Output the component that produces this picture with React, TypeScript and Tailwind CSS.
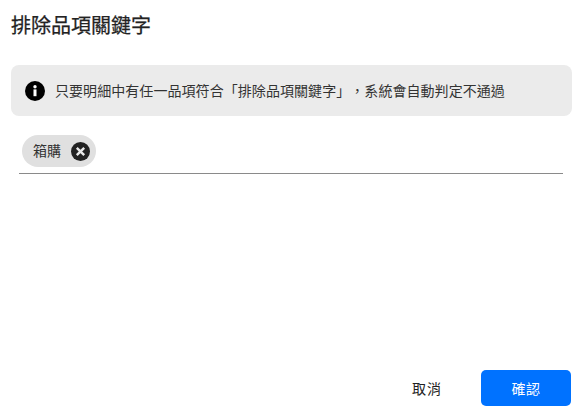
export default function App() {
  return (
    <div className="w-[583px] h-[416px] bg-white flex flex-col font-['Inter','Noto_Sans_CJK_TC',sans-serif] text-[#212121] overflow-hidden [text-spacing-trim:space-all]">
      <div className="h-[65px] shrink-0 pl-[11px] pt-[13px]">
        <h1 className="text-[20px] leading-[26px] font-normal text-[#222] [-webkit-text-stroke:0.25px_#222]">排除品項關鍵字</h1>
      </div>
      <div className="mx-[11px] h-[51px] shrink-0 rounded-lg bg-[#ebebeb] flex items-center pl-[14px] gap-[10px]">
        <svg width="20" height="20" viewBox="0 0 20 20" className="shrink-0">
          <circle cx="10" cy="10" r="10" fill="#000" />
          <rect x="8.5" y="8.4" width="3" height="6.8" fill="#fff" />
          <circle cx="10" cy="5.8" r="1.7" fill="#fff" />
        </svg>
        <p className="text-[14px] leading-5 tracking-[0.06px] text-[#333] whitespace-nowrap">只要明細中有任一品項符合「排除品項關鍵字」，系統會自動判定不通過</p>
      </div>
      <div className="ml-[19px] mr-[20px] mt-[19px] h-[39px] shrink-0 border-b border-[#8a8a8a] pl-[3px]">
        <div className="w-[74px] h-[32px] rounded-full bg-[#e0e0e0] flex items-center pl-[11px] gap-[10px]">
          <span className="text-[14px] leading-5 text-[#333]">箱購</span>
          <svg width="19" height="19" viewBox="0 0 19 19" className="shrink-0">
            <circle cx="9.5" cy="9.5" r="9.5" fill="#212121" />
            <path d="M5.8 5.8 13.2 13.2M13.2 5.8 5.8 13.2" stroke="#e8e8e8" strokeWidth="2.4" />
          </svg>
        </div>
      </div>
      <div className="flex-1" />
      <div className="flex justify-end items-center gap-[10px] pr-[12px] pb-[10px]">
        <button className="w-[88px] h-[36px] text-[14px] font-normal tracking-[1px] text-[#212121]">取消</button>
        <button className="w-[90px] h-[36px] rounded-[5px] bg-[#0072ff] text-[14px] font-normal tracking-[0.5px] text-white">確認</button>
      </div>
    </div>
  );
}
